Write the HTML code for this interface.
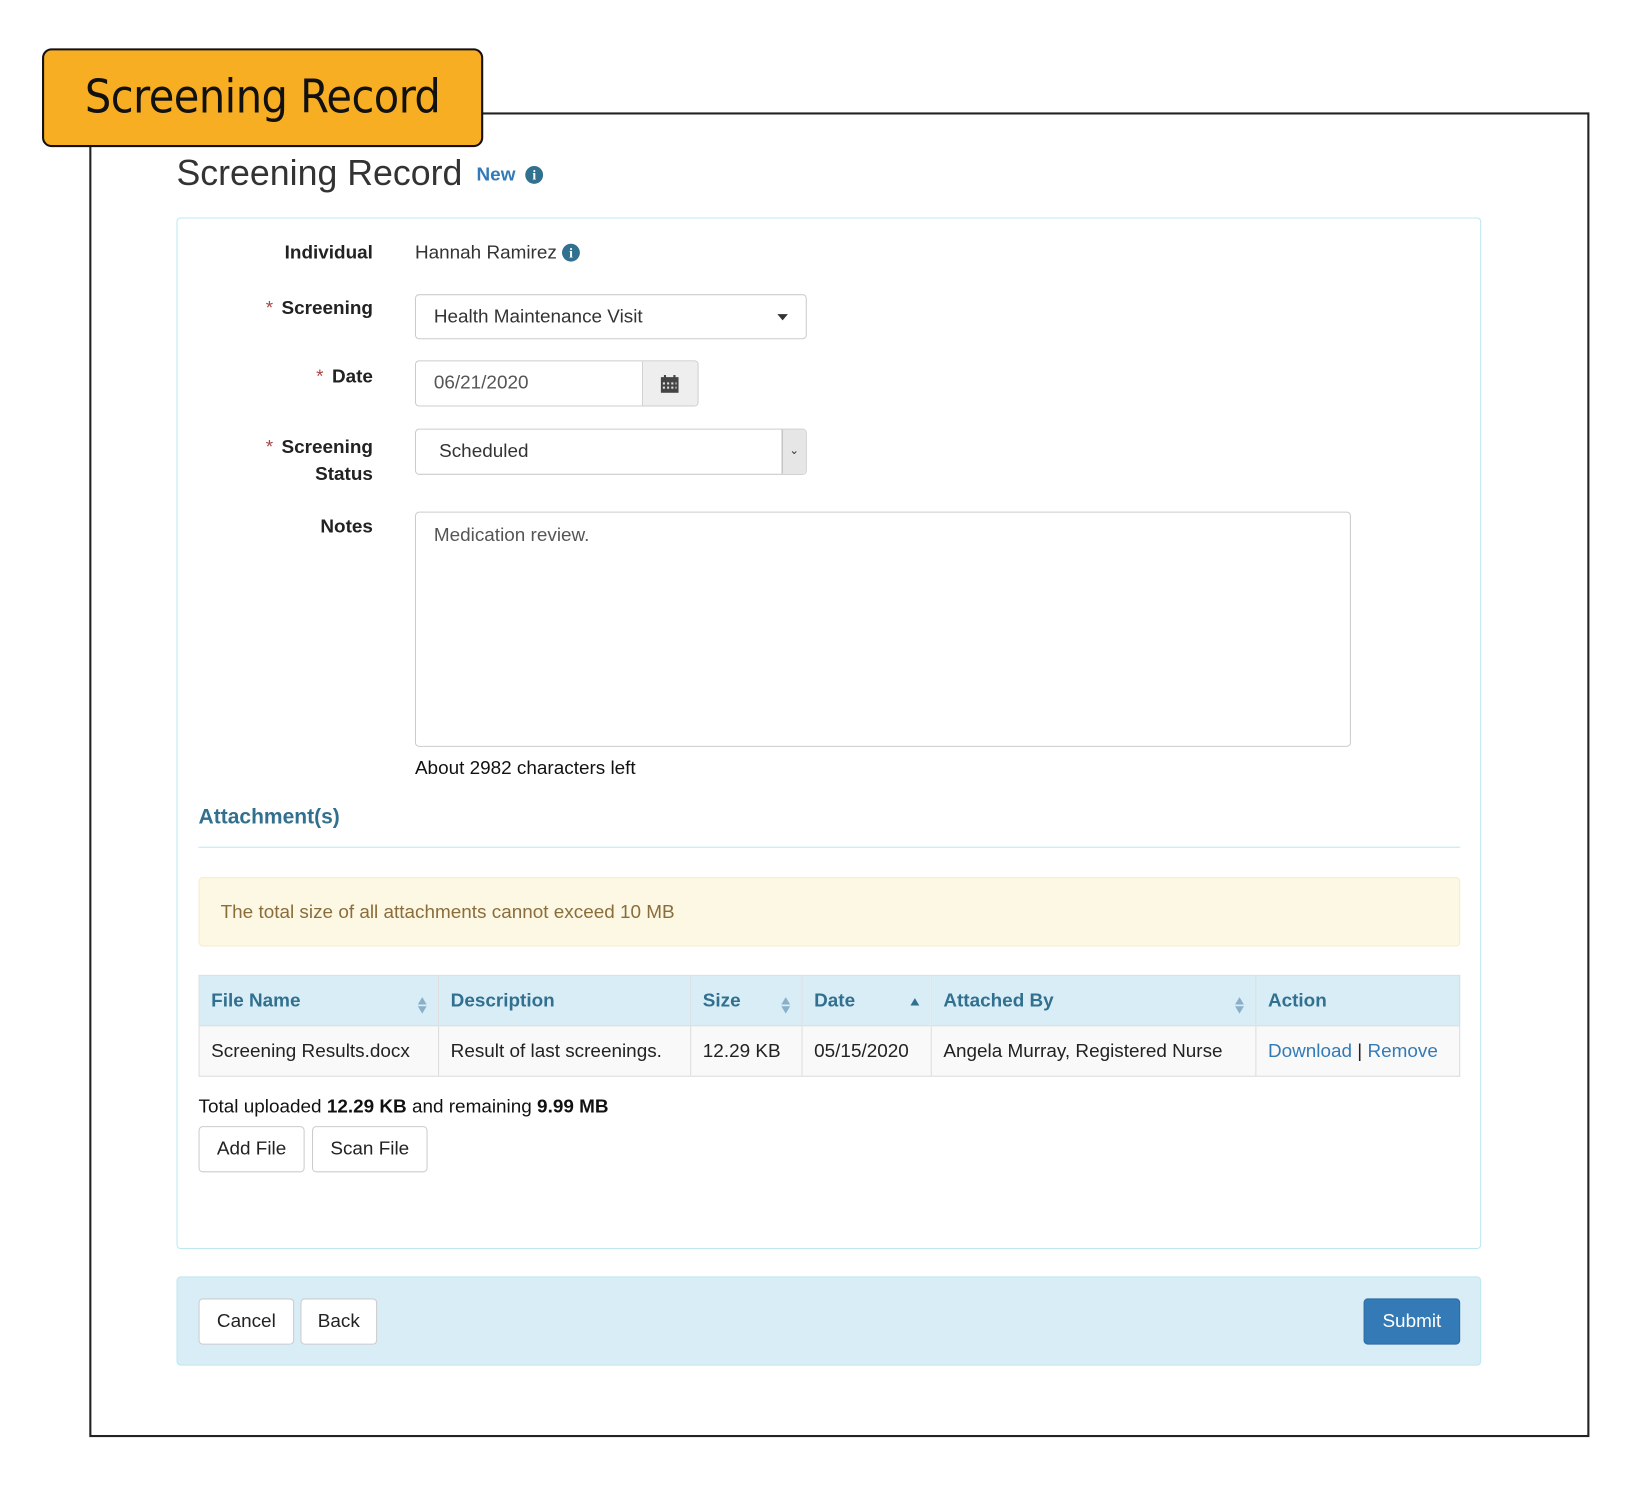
<!DOCTYPE html>
<html><head><meta charset="utf-8"><style>
html,body{margin:0;padding:0;background:#fff;width:1648px;height:1502px;overflow:hidden}
#w{position:absolute;left:0;top:0;width:1570px;height:1430px;transform:scale(1.0505);transform-origin:0 0;font-family:"Liberation Sans",sans-serif;color:#333;font-size:18px}
.a{position:absolute}
.frame{left:85px;top:107px;width:1424px;height:1257px;border:2px solid #222}
.tag{left:40px;top:46px;width:416px;height:90px;background:#F8AE22;border:2px solid #111;border-radius:9px;font-size:44px;line-height:90px;text-align:center;color:#111;letter-spacing:-0.5px;font-family:"DejaVu Sans Condensed","Liberation Sans Narrow","Liberation Sans",sans-serif}
.info{display:inline-block;width:17px;height:17px;border-radius:50%;background:#31708f;color:#fff;font-size:13px;font-weight:bold;line-height:17px;text-align:center;font-family:"Liberation Serif",serif;vertical-align:1px}
.lbl{font-weight:bold;text-align:right;width:200px;left:155px;color:#222}
.req{color:#a94442;font-weight:normal;margin-right:8px}
.inp{border:1px solid #ccc;border-radius:4px;background:#fff;box-sizing:border-box;padding-left:17px;line-height:41px}
th,td{text-align:left;padding:0 11px;border-right:1px solid #ddd}
.btn{border:1px solid #ccc;border-radius:4px;background:#fff;box-sizing:border-box;text-align:center;line-height:41px;font-size:18px;color:#222}
.s{position:absolute;right:9px;top:19px;color:#8ab0c8;font-size:12px;line-height:9px;transform:scaleX(1.2)}
</style></head><body><div id="w">
<div class="a frame"></div>
<div class="a tag">Screening Record</div>
<div class="a" style="left:168px;top:146px;font-size:34px;color:#333">Screening Record <span style="font-size:18px;color:#337ab7;font-weight:bold;vertical-align:4px;margin-left:4px">New</span> <span class="info" style="vertical-align:5px">i</span></div>
<div class="a" style="left:168px;top:207px;width:1240px;height:980px;border:1px solid #bce8f1;border-radius:4px"></div>

<div class="a lbl" style="top:230px">Individual</div>
<div class="a" style="left:395px;top:230px">Hannah Ramirez <span class="info">i</span></div>

<div class="a lbl" style="top:283px"><span class="req">*</span>Screening</div>
<div class="a inp" style="left:395px;top:280px;width:373px;height:43px">Health Maintenance Visit<span style="position:absolute;right:17px;top:18px;border-left:5px solid transparent;border-right:5px solid transparent;border-top:6px solid #333"></span></div>

<div class="a lbl" style="top:348px"><span class="req">*</span>Date</div>
<div class="a inp" style="left:395px;top:343px;width:270px;height:44px;color:#555">06/21/2020
<div class="a" style="right:0;top:0;width:52px;height:42px;background:#eee;border-left:1px solid #ccc;border-radius:0 4px 4px 0"><svg style="position:absolute;left:17px;top:13px" width="17" height="17" viewBox="0 0 17 17"><rect x="0" y="2" width="17" height="15" fill="#444"/><rect x="3" y="0" width="2" height="4" fill="#444"/><rect x="12" y="0" width="2" height="4" fill="#444"/><g fill="#ddd"><rect x="2" y="7" width="2" height="2"/><rect x="6" y="7" width="2" height="2"/><rect x="10" y="7" width="2" height="2"/><rect x="14" y="7" width="1" height="2"/><rect x="2" y="11" width="2" height="2"/><rect x="6" y="11" width="2" height="2"/><rect x="10" y="11" width="2" height="2"/><rect x="14" y="11" width="1" height="2"/></g></svg></div></div>

<div class="a lbl" style="top:412px;line-height:26px"><span class="req">*</span>Screening<br>Status</div>
<div class="a inp" style="left:395px;top:408px;width:373px;height:44px;padding-left:22px;color:#333">Scheduled
<div class="a" style="right:0;top:0;width:22px;height:42px;background:#e6e6e6;border-left:1px solid #aaa;border-radius:0 4px 4px 0;text-align:center;font-size:11px;line-height:40px">&#8964;</div></div>

<div class="a lbl" style="top:491px">Notes</div>
<div class="a inp" style="left:395px;top:487px;width:891px;height:224px;line-height:22px;padding-top:10px;color:#555">Medication review.</div>
<div class="a" style="left:395px;top:721px;color:#111">About 2982 characters left</div>

<div class="a" style="left:189px;top:767px;font-size:20px;font-weight:bold;color:#31708f">Attachment(s)</div>
<div class="a" style="left:189px;top:806px;width:1201px;height:1px;background:#bce8f1"></div>
<div class="a" style="left:189px;top:835px;width:1199px;height:64px;background:#fcf8e3;border:1px solid #faebcc;border-radius:4px;color:#8a6d3b;line-height:64px"><span style="padding-left:20px">The total size of all attachments cannot exceed 10 MB</span></div>

<table class="a" style="left:189px;top:928px;width:1201px;border-collapse:collapse;border:1px solid #ddd;font-size:18px">
<tr style="height:48px;background:#d9edf7;color:#31708f;font-weight:bold">
<th style="width:205px;position:relative">File Name<span class="s">&#9650;<br>&#9660;</span></th>
<th style="width:217px">Description</th>
<th style="width:83px;position:relative">Size<span class="s">&#9650;<br>&#9660;</span></th>
<th style="width:100px;position:relative">Date<span style="position:absolute;right:9px;top:17px;color:#31708f;font-size:12px;transform:scaleX(1.2)">&#9650;</span></th>
<th style="width:286px;position:relative">Attached By<span class="s">&#9650;<br>&#9660;</span></th>
<th style="border-right:none">Action</th></tr>
<tr style="height:48px;background:#f9f9f9;border-top:1px solid #ddd;color:#222">
<td>Screening Results.docx</td><td>Result of last screenings.</td><td>12.29 KB</td><td>05/15/2020</td><td>Angela Murray, Registered Nurse</td><td style="color:#337ab7;border-right:none;white-space:nowrap">Download <span style="color:#222">|</span> Remove</td></tr>
</table>

<div class="a" style="left:189px;top:1043px;color:#111">Total uploaded <b>12.29 KB</b> and remaining <b>9.99 MB</b></div>
<div class="a btn" style="left:189px;top:1072px;width:101px;height:44px">Add File</div>
<div class="a btn" style="left:297px;top:1072px;width:110px;height:44px">Scan File</div>

<div class="a" style="left:168px;top:1215px;width:1242px;height:85px;background:#d9edf7;border:1px solid #bce8f1;border-radius:4px;box-sizing:border-box"></div>
<div class="a btn" style="left:189px;top:1236px;width:91px;height:44px">Cancel</div>
<div class="a btn" style="left:286px;top:1236px;width:73px;height:44px">Back</div>
<div class="a btn" style="left:1298px;top:1236px;width:92px;height:44px;background:#337ab7;border-color:#2e6da4;color:#fff">Submit</div>
</div></body></html>
